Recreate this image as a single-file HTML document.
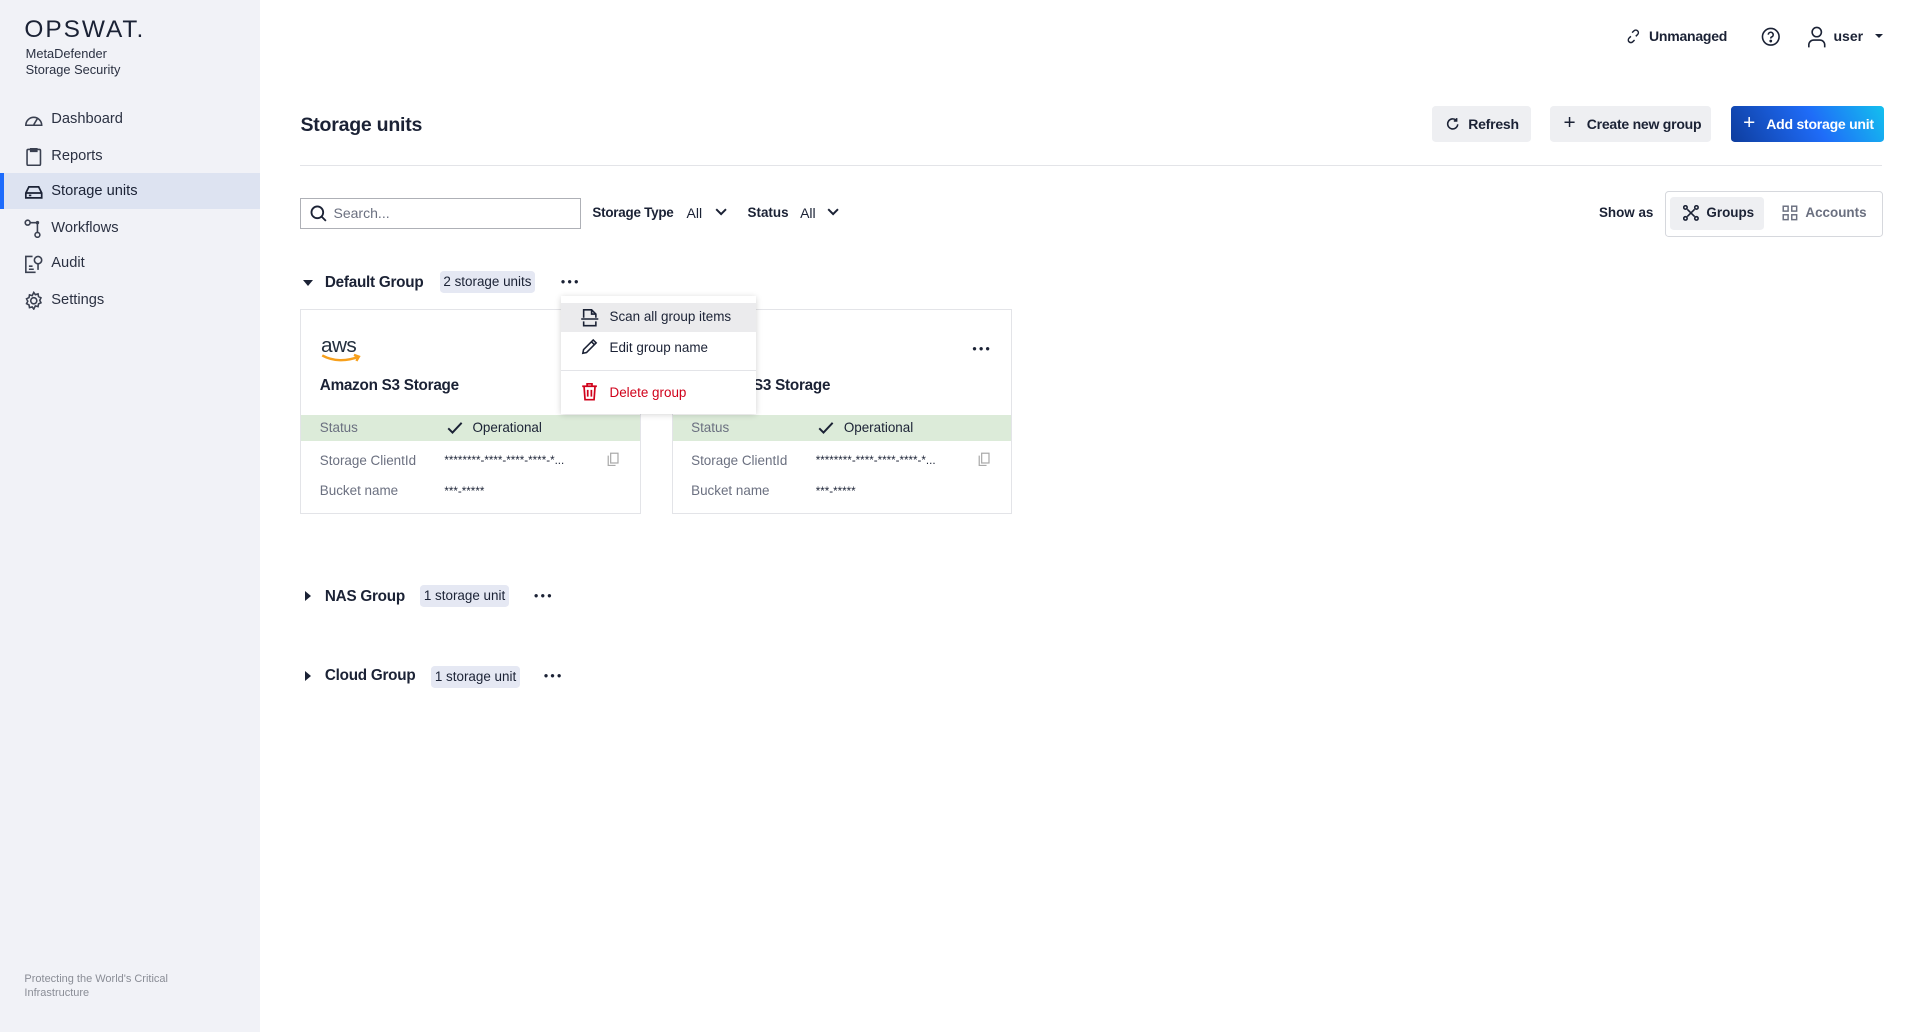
<!DOCTYPE html>
<html><head><meta charset="utf-8">
<style>
html,body{margin:0;padding:0;background:#fff;overflow:hidden;}
#root{zoom:1.2215;width:1566px;height:845px;position:relative;font-family:"Liberation Sans",sans-serif;color:#1b2235;}
.a{position:absolute;white-space:nowrap;}
.side{position:absolute;left:0;top:0;width:213px;height:845px;background:#f1f2f7;}
.nav{position:absolute;left:0;width:213px;height:29px;font-size:12px;color:#2b3142;}
.nav span{position:absolute;left:42px;top:8px;}
.nav svg{position:absolute;left:20px;top:7px;}
.btn{position:absolute;top:87px;height:29px;border-radius:3px;background:#eeeff2;font-size:11.5px;font-weight:bold;color:#1b2235;}
.btn span{position:absolute;top:8px;white-space:nowrap;letter-spacing:-0.2px;}
.badge{position:absolute;height:18px;background:#e5e8f3;border-radius:3px;font-size:11px;line-height:18px;padding:0 3px;color:#1b2235;}
.dots{position:absolute;font-size:6.5px;letter-spacing:1.5px;color:#1b2235;}
.card{position:absolute;top:253px;width:277px;height:166px;border:1px solid #e3e4e8;background:#fff;}
.card .lbl{position:absolute;left:15px;font-size:11px;color:#6b7080;}
.card .val{position:absolute;left:117px;font-size:9.5px;color:#1b2235;}
.gt{font-size:12.5px;font-weight:bold;letter-spacing:-0.2px;}
</style></head><body><div id="root">
<div class="side">
 <div class="a" style="left:20px;top:13px;font-size:20px;letter-spacing:1.6px;color:#1b2235;">OPSWAT.</div>
 <div class="a" style="left:21px;top:38px;font-size:10.5px;line-height:13px;color:#2b3142;">MetaDefender<br>Storage Security</div>
 <div class="nav" style="top:83px"><svg width="16" height="16" viewBox="0 0 16 16" fill="none" stroke="#3a4050" stroke-width="1.3"><path d="M1.5 12.5a6.5 6.5 0 1 1 13 0z"/><path d="M8 12l3-5"/></svg><span>Dashboard</span></div>
 <div class="nav" style="top:113px"><svg width="16" height="16" viewBox="0 0 16 16" fill="none" stroke="#3a4050" stroke-width="1.3"><rect x="2.5" y="2" width="11" height="13" rx="1"/><path d="M5.5 1.5h5v2h-5z" fill="#3a4050"/></svg><span>Reports</span></div>
 <div class="nav" style="top:142px;background:#dde3f1;"><div class="a" style="left:0;top:0;width:3px;height:29px;background:#1d6bfc"></div><svg width="16" height="16" viewBox="0 0 16 16" fill="none" stroke="#1b2235" stroke-width="1.4"><path d="M1.5 9l2.5-5h8l2.5 5v4h-13z M1.5 9h13"/><path d="M4 11h2"/></svg><span style="color:#1b2235">Storage units</span></div>
 <div class="nav" style="top:172px"><svg width="16" height="16" viewBox="0 0 16 16" fill="none" stroke="#3a4050" stroke-width="1.3"><circle cx="3" cy="3" r="2"/><circle cx="11" cy="13" r="2"/><path d="M5 3h6v8"/><circle cx="11" cy="3" r="0.8" fill="#3a4050"/></svg><span>Workflows</span></div>
 <div class="nav" style="top:201px"><svg width="16" height="16" viewBox="0 0 16 16" fill="none" stroke="#3a4050" stroke-width="1.3"><path d="M7 2H1.5v13h8"/><path d="M4 10h3M4 12.5h4"/><circle cx="11.5" cy="5" r="3"/><path d="M11.5 8v5"/></svg><span>Audit</span></div>
 <div class="nav" style="top:231px"><svg width="16" height="16" viewBox="0 0 16 16" fill="none" stroke="#3a4050" stroke-width="1.3"><circle cx="8" cy="8" r="2.5"/><path d="M8 1.2l1.3 1.8 2.2-.6.4 2.2 2 1-1 2 1 2-2 1-.4 2.2-2.2-.6L8 14.8l-1.3-1.8-2.2.6-.4-2.2-2-1 1-2-1-2 2-1 .4-2.2 2.2.6z"/></svg><span>Settings</span></div>
 <div class="a" style="left:20px;top:796px;font-size:9px;line-height:11.5px;color:#8a8d96;">Protecting the World's Critical<br>Infrastructure</div>
</div>

<svg class="a" style="left:1331px;top:24px" width="12" height="12" viewBox="0 0 12 12" fill="none" stroke="#1b2235" stroke-width="1.2"><path d="M5 3l1.5-1.5a2 2 0 0 1 3 3L8 6M4 6L2.5 7.5a2 2 0 0 0 3 3L7 9"/></svg>
<div class="a" style="left:1350px;top:23px;font-size:11.5px;font-weight:bold;letter-spacing:-0.2px;">Unmanaged</div>
<svg class="a" style="left:1442px;top:22px" width="16" height="16" viewBox="0 0 16 16" fill="none" stroke="#1b2235" stroke-width="1.3"><circle cx="8" cy="8" r="6.8"/><path d="M6 6.3a2 2 0 1 1 2.6 1.9c-.5.2-.6.6-.6 1.2"/><circle cx="8" cy="11.5" r=".5" fill="#1b2235"/></svg>
<svg class="a" style="left:1479px;top:21px" width="16" height="18" viewBox="0 0 16 18" fill="none" stroke="#1b2235" stroke-width="1.3"><circle cx="8" cy="5" r="3.8"/><path d="M1.5 17.5v-2a4 4 0 0 1 4-4h5a4 4 0 0 1 4 4v2"/></svg>
<div class="a" style="left:1501px;top:23px;font-size:11.5px;font-weight:bold;">user</div>
<div class="a" style="left:1535px;top:28px;width:0;height:0;border-left:3.5px solid transparent;border-right:3.5px solid transparent;border-top:4px solid #1b2235;"></div>

<div class="a" style="left:246px;top:93px;font-size:16px;font-weight:bold;letter-spacing:-0.2px;color:#1b2235;">Storage units</div>
<div class="btn" style="left:1172px;width:81px;"><svg class="a" style="left:12px;top:9px" width="11" height="11" viewBox="0 0 12 12" fill="none" stroke="#1b2235" stroke-width="1.4"><path d="M10.5 6.5A4.5 4.5 0 1 1 9 2.8"/><path d="M9.5 1v2.5H7"/></svg><span style="left:30px">Refresh</span></div>
<div class="btn" style="left:1269px;width:132px;"><span style="left:11px;top:4px;font-size:17px;font-weight:normal">+</span><span style="left:30px">Create new group</span></div>
<div class="btn" style="left:1417px;width:125px;background:linear-gradient(60deg,#0e3d9e,#1f6cf8 55%,#13c0ee);color:#fff;"><span style="left:10px;top:4px;font-size:17px;font-weight:normal">+</span><span style="left:29px">Add storage unit</span></div>
<div class="a" style="left:246px;top:135px;width:1295px;height:1px;background:#e3e4e8;"></div>

<div class="a" style="left:246px;top:162px;width:228px;height:24px;border:1px solid #aeb0b6;"></div>
<svg class="a" style="left:254px;top:168px" width="14" height="14" viewBox="0 0 14 14" fill="none" stroke="#1b2235" stroke-width="1.5"><circle cx="6" cy="6" r="4.8"/><path d="M9.5 9.5l3.5 3.5"/></svg>
<div class="a" style="left:273px;top:168px;font-size:11.5px;color:#6b7080;">Search...</div>
<div class="a" style="left:485px;top:168px;font-size:11px;font-weight:bold;letter-spacing:-0.2px;">Storage Type</div>
<div class="a" style="left:562px;top:168px;font-size:11.5px;">All</div>
<svg class="a" style="left:585px;top:170px" width="10" height="7" viewBox="0 0 10 7" fill="none" stroke="#1b2235" stroke-width="1.6"><path d="M1 1l4 4 4-4"/></svg>
<div class="a" style="left:612px;top:168px;font-size:11px;font-weight:bold;">Status</div>
<div class="a" style="left:655px;top:168px;font-size:11.5px;">All</div>
<svg class="a" style="left:677px;top:170px" width="10" height="7" viewBox="0 0 10 7" fill="none" stroke="#1b2235" stroke-width="1.6"><path d="M1 1l4 4 4-4"/></svg>

<div class="a" style="left:1309px;top:168px;font-size:11px;font-weight:bold;">Show as</div>
<div class="a" style="left:1363px;top:156px;width:177px;height:36px;border:1px solid #d6d8dd;border-radius:3px;"></div>
<div class="a" style="left:1367px;top:161px;width:77px;height:27px;background:#eeeff2;border-radius:3px;"></div>
<svg class="a" style="left:1378px;top:168px" width="13" height="13" viewBox="0 0 13 13" fill="none" stroke="#1b2235" stroke-width="1.3"><circle cx="2" cy="2" r="1.4"/><circle cx="11" cy="2" r="1.4"/><circle cx="2" cy="11" r="1.4"/><circle cx="11" cy="11" r="1.4"/><path d="M3.5 3.5l6 6M9.5 3.5l-6 6"/></svg>
<div class="a" style="left:1397px;top:168px;font-size:11px;font-weight:bold;">Groups</div>
<svg class="a" style="left:1459px;top:168px" width="13" height="13" viewBox="0 0 13 13" fill="none" stroke="#6b7080" stroke-width="1.2"><rect x="1" y="1" width="4" height="4"/><rect x="8" y="1" width="4" height="4"/><rect x="1" y="8" width="4" height="4"/><rect x="8" y="8" width="4" height="4"/></svg>
<div class="a" style="left:1478px;top:168px;font-size:11px;font-weight:bold;color:#6b7080;">Accounts</div>

<div class="a" style="left:248px;top:229px;width:0;height:0;border-left:4.5px solid transparent;border-right:4.5px solid transparent;border-top:5px solid #1b2235;"></div>
<div class="a gt" style="left:266px;top:224px;">Default Group</div>
<div class="badge" style="left:360px;top:222px;">2 storage units</div>
<div class="dots" style="left:459px;top:227px;">●●●</div>

<div class="card" style="left:246px;">
 <div class="a" style="left:16px;top:20px;font-size:17px;color:#232f3e;letter-spacing:-0.5px;">aws</div>
 <svg class="a" style="left:16px;top:35px" width="34" height="9" viewBox="0 0 34 9" fill="none" stroke="#f7a01c" stroke-width="2"><path d="M1 2c9 5 20 5 30 1"/><path d="M27 1.5l4 1.5-2 3.5"/></svg>
 <div class="a" style="left:15px;top:55px;font-size:12.5px;font-weight:bold;letter-spacing:-0.2px;">Amazon S3 Storage</div>
 <div class="a" style="left:0;top:86px;width:277px;height:21px;background:#dcebd9;"></div>
 <div class="lbl" style="top:90px;">Status</div>
 <svg class="a" style="left:119px;top:91px" width="13" height="11" viewBox="0 0 13 11" fill="none" stroke="#1b2235" stroke-width="1.6"><path d="M1 6l3.5 3.5L12 1.5"/></svg>
 <div class="a" style="left:140px;top:90px;font-size:11px;">Operational</div>
 <div class="lbl" style="top:117px;">Storage ClientId</div>
 <div class="val" style="top:118px;">********-****-****-****-*...</div>
 <svg class="a" style="left:250px;top:116px" width="10" height="12" viewBox="0 0 10 12" fill="none" stroke="#aaa" stroke-width="1"><rect x="3" y="1" width="6" height="8"/><path d="M1 3v8h6"/></svg>
 <div class="lbl" style="top:142px;">Bucket name</div>
 <div class="val" style="top:143px;">***-*****</div>
</div>
<div class="card" style="left:550px;">
 <div class="dots" style="left:245px;top:28px;">●●●</div>
 <div class="a" style="left:15px;top:55px;font-size:12.5px;font-weight:bold;letter-spacing:-0.2px;">Amazon S3 Storage</div>
 <div class="a" style="left:0;top:86px;width:277px;height:21px;background:#dcebd9;"></div>
 <div class="lbl" style="top:90px;">Status</div>
 <svg class="a" style="left:119px;top:91px" width="13" height="11" viewBox="0 0 13 11" fill="none" stroke="#1b2235" stroke-width="1.6"><path d="M1 6l3.5 3.5L12 1.5"/></svg>
 <div class="a" style="left:140px;top:90px;font-size:11px;">Operational</div>
 <div class="lbl" style="top:117px;">Storage ClientId</div>
 <div class="val" style="top:118px;">********-****-****-****-*...</div>
 <svg class="a" style="left:250px;top:116px" width="10" height="12" viewBox="0 0 10 12" fill="none" stroke="#aaa" stroke-width="1"><rect x="3" y="1" width="6" height="8"/><path d="M1 3v8h6"/></svg>
 <div class="lbl" style="top:142px;">Bucket name</div>
 <div class="val" style="top:143px;">***-*****</div>
</div>

<div class="a" style="left:459px;top:242px;width:160px;height:97px;background:#fff;box-shadow:0 1px 5px rgba(0,0,0,0.18);">
 <div class="a" style="left:0;top:6px;width:160px;height:24px;background:#ebebed;"></div>
 <svg class="a" style="left:16px;top:10px" width="16" height="16" viewBox="0 0 16 16" fill="none" stroke="#1b2235" stroke-width="1.3"><path d="M3 8V1.5h6.5L13 5v3"/><path d="M9.5 1.5V5H13"/><path d="M1 9h14"/><path d="M3 11v3.5h10V11"/></svg>
 <div class="a" style="left:40px;top:11px;font-size:11px;">Scan all group items</div>
 <svg class="a" style="left:17px;top:35px" width="14" height="14" viewBox="0 0 14 14" fill="none" stroke="#1b2235" stroke-width="1.3"><path d="M1.5 12.5l.6-3L10 1.6l2.4 2.4-7.9 7.9z"/><path d="M8.5 3l2.4 2.4"/></svg>
 <div class="a" style="left:40px;top:36px;font-size:11px;">Edit group name</div>
 <div class="a" style="left:0;top:61px;width:160px;height:1px;background:#e3e4e8;"></div>
 <svg class="a" style="left:17px;top:71px" width="14" height="16" viewBox="0 0 14 16" fill="none" stroke="#d0021b" stroke-width="1.4"><path d="M1 3.5h12M5 3.5V1.5h4v2"/><path d="M2.5 3.5l.8 11h7.4l.8-11"/><path d="M5.5 6.5v5.5M8.5 6.5v5.5"/></svg>
 <div class="a" style="left:40px;top:73px;font-size:11px;color:#d0021b;">Delete group</div>
</div>

<div class="a" style="left:250px;top:484px;width:0;height:0;border-top:4.5px solid transparent;border-bottom:4.5px solid transparent;border-left:5px solid #1b2235;"></div>
<div class="a gt" style="left:266px;top:481px;">NAS Group</div>
<div class="badge" style="left:344px;top:479px;">1 storage unit</div>
<div class="dots" style="left:437px;top:484px;">●●●</div>
<div class="a" style="left:250px;top:549px;width:0;height:0;border-top:4.5px solid transparent;border-bottom:4.5px solid transparent;border-left:5px solid #1b2235;"></div>
<div class="a gt" style="left:266px;top:546px;">Cloud Group</div>
<div class="badge" style="left:353px;top:545px;">1 storage unit</div>
<div class="dots" style="left:445px;top:549px;">●●●</div>
</div></body></html>
